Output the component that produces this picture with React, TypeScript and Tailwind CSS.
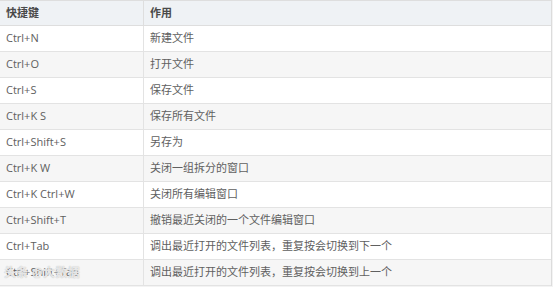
const rows = [
  ['Ctrl+N', '新建文件'],
  ['Ctrl+O', '打开文件'],
  ['Ctrl+S', '保存文件'],
  ['Ctrl+K S', '保存所有文件'],
  ['Ctrl+Shift+S', '另存为'],
  ['Ctrl+K W', '关闭一组拆分的窗口'],
  ['Ctrl+K Ctrl+W', '关闭所有编辑窗口'],
  ['Ctrl+Shift+T', '撤销最近关闭的一个文件编辑窗口'],
  ['Ctrl+Tab', '调出最近打开的文件列表，重复按会切换到下一个'],
  ['Ctrl+Shift+Tab', '调出最近打开的文件列表，重复按会切换到上一个'],
]

export default function App() {
  return (
    <div
      className="relative w-[553px] h-[287px] bg-[#f3f3f3] overflow-hidden text-[11px] text-[#606060]"
      style={{ fontFamily: '"Open Sans", "Noto Sans CJK SC", sans-serif' }}
    >
      <div className="w-[552px] bg-white border-r border-[#dcdcdc]">
        <div className="grid grid-cols-[144px_1fr] h-[26px] bg-[#eff2f5] border-y border-[#dedede] items-center font-semibold text-[#4a4a4a]">
          <div className="pl-[6px] border-r border-[#dedede] h-full flex items-center">快捷键</div>
          <div className="pl-[6px]">作用</div>
        </div>
        {rows.map(([key, desc], i) => (
          <div
            key={i}
            className={
              'grid grid-cols-[144px_1fr] h-[26px] border-b border-[#e3e3e3] items-center ' +
              (i % 2 === 1 ? 'bg-[#f6f6f6]' : 'bg-white')
            }
          >
            <div className="pl-[6px] border-r border-[#e3e3e3] h-full flex items-center">{key}</div>
            <div className="pl-[6px]">{desc}</div>
          </div>
        ))}
      </div>
      <div
        className="absolute left-[4px] top-[264px] text-[12px] text-white/70 font-semibold tracking-wide"
        style={{ textShadow: '0 0 1px #aaa' }}
      >
        头条 @大数据
      </div>
    </div>
  )
}
